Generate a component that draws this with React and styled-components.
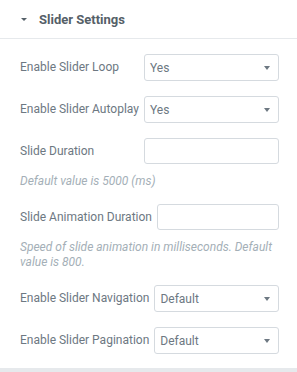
import React from 'react';
import styled, { createGlobalStyle } from 'styled-components';

const GlobalStyle = createGlobalStyle`
    html, body {
        margin: 0;
        padding: 0;
        background: #e6e9ec;
        font-family: Roboto, 'Liberation Sans', Arial, sans-serif;
    }
`;

const Panel = styled.div`
    width: 297px;
    background: #ffffff;
`;

const SectionHeader = styled.div`
    height: 38px;
    display: flex;
    align-items: center;
    padding-left: 21px;
    border-bottom: 1px solid #e6e9ec;
    color: #556068;
    font-size: 13px;
    font-weight: 700;
`;

const Caret = styled.span`
    width: 0;
    height: 0;
    border-left: 3px solid transparent;
    border-right: 3px solid transparent;
    border-top: 3px solid #556068;
    margin-right: 12px;
    margin-top: 1px;
`;

const Controls = styled.div`
    padding: 15px 18px 0 20px;
`;

const Control = styled.div`
    padding-bottom: ${(p) => (p.last ? 14 : 15)}px;
`;

const Field = styled.div`
    display: flex;
    align-items: center;
`;

const Label = styled.label`
    flex-shrink: 0;
    margin-right: 5px;
    color: #6d7882;
    font-size: 12px;
    line-height: 15px;
`;

const InputWrap = styled.div`
    position: relative;
    flex: 1 1 auto;
    max-width: 135px;
    margin-left: auto;
`;

const Box = styled.div`
    box-sizing: border-box;
    height: ${(p) => (p.select ? 27 : 26)}px;
    border: 1px solid #d5dadf;
    border-radius: 3px;
    background: #fff;
    display: flex;
    align-items: center;
    padding: 0 5px;
    color: #6d7882;
    font-size: 12px;
`;

const SelectArrow = styled.span`
    position: absolute;
    right: 9px;
    top: 12px;
    width: 0;
    height: 0;
    border-left: 3px solid transparent;
    border-right: 3px solid transparent;
    border-top: 4px solid #6d7882;
`;

const Description = styled.div`
    margin-top: 10px;
    color: #a4afb7;
    font-size: 12px;
    font-style: italic;
    line-height: 15px;
`;

const controls = [
    { label: 'Enable Slider Loop', type: 'select', value: 'Yes' },
    { label: 'Enable Slider Autoplay', type: 'select', value: 'Yes' },
    { label: 'Slide Duration', type: 'text', desc: 'Default value is 5000 (ms)' },
    {
        label: 'Slide Animation Duration',
        type: 'text',
        desc: 'Speed of slide animation in milliseconds. Default value is 800.',
    },
    { label: 'Enable Slider Navigation', type: 'select', value: 'Default' },
    { label: 'Enable Slider Pagination', type: 'select', value: 'Default' },
];

const App = () => (
    <>
        <GlobalStyle />
        <Panel>
            <SectionHeader>
                <Caret />
                Slider Settings
            </SectionHeader>
            <Controls>
                {controls.map((c, i) => (
                    <Control key={c.label} last={i === controls.length - 1}>
                        <Field>
                            <Label>{c.label}</Label>
                            <InputWrap>
                                <Box select={c.type === 'select'}>{c.value}</Box>
                                {c.type === 'select' && <SelectArrow />}
                            </InputWrap>
                        </Field>
                        {c.desc && <Description>{c.desc}</Description>}
                    </Control>
                ))}
            </Controls>
        </Panel>
    </>
);

export default App;
